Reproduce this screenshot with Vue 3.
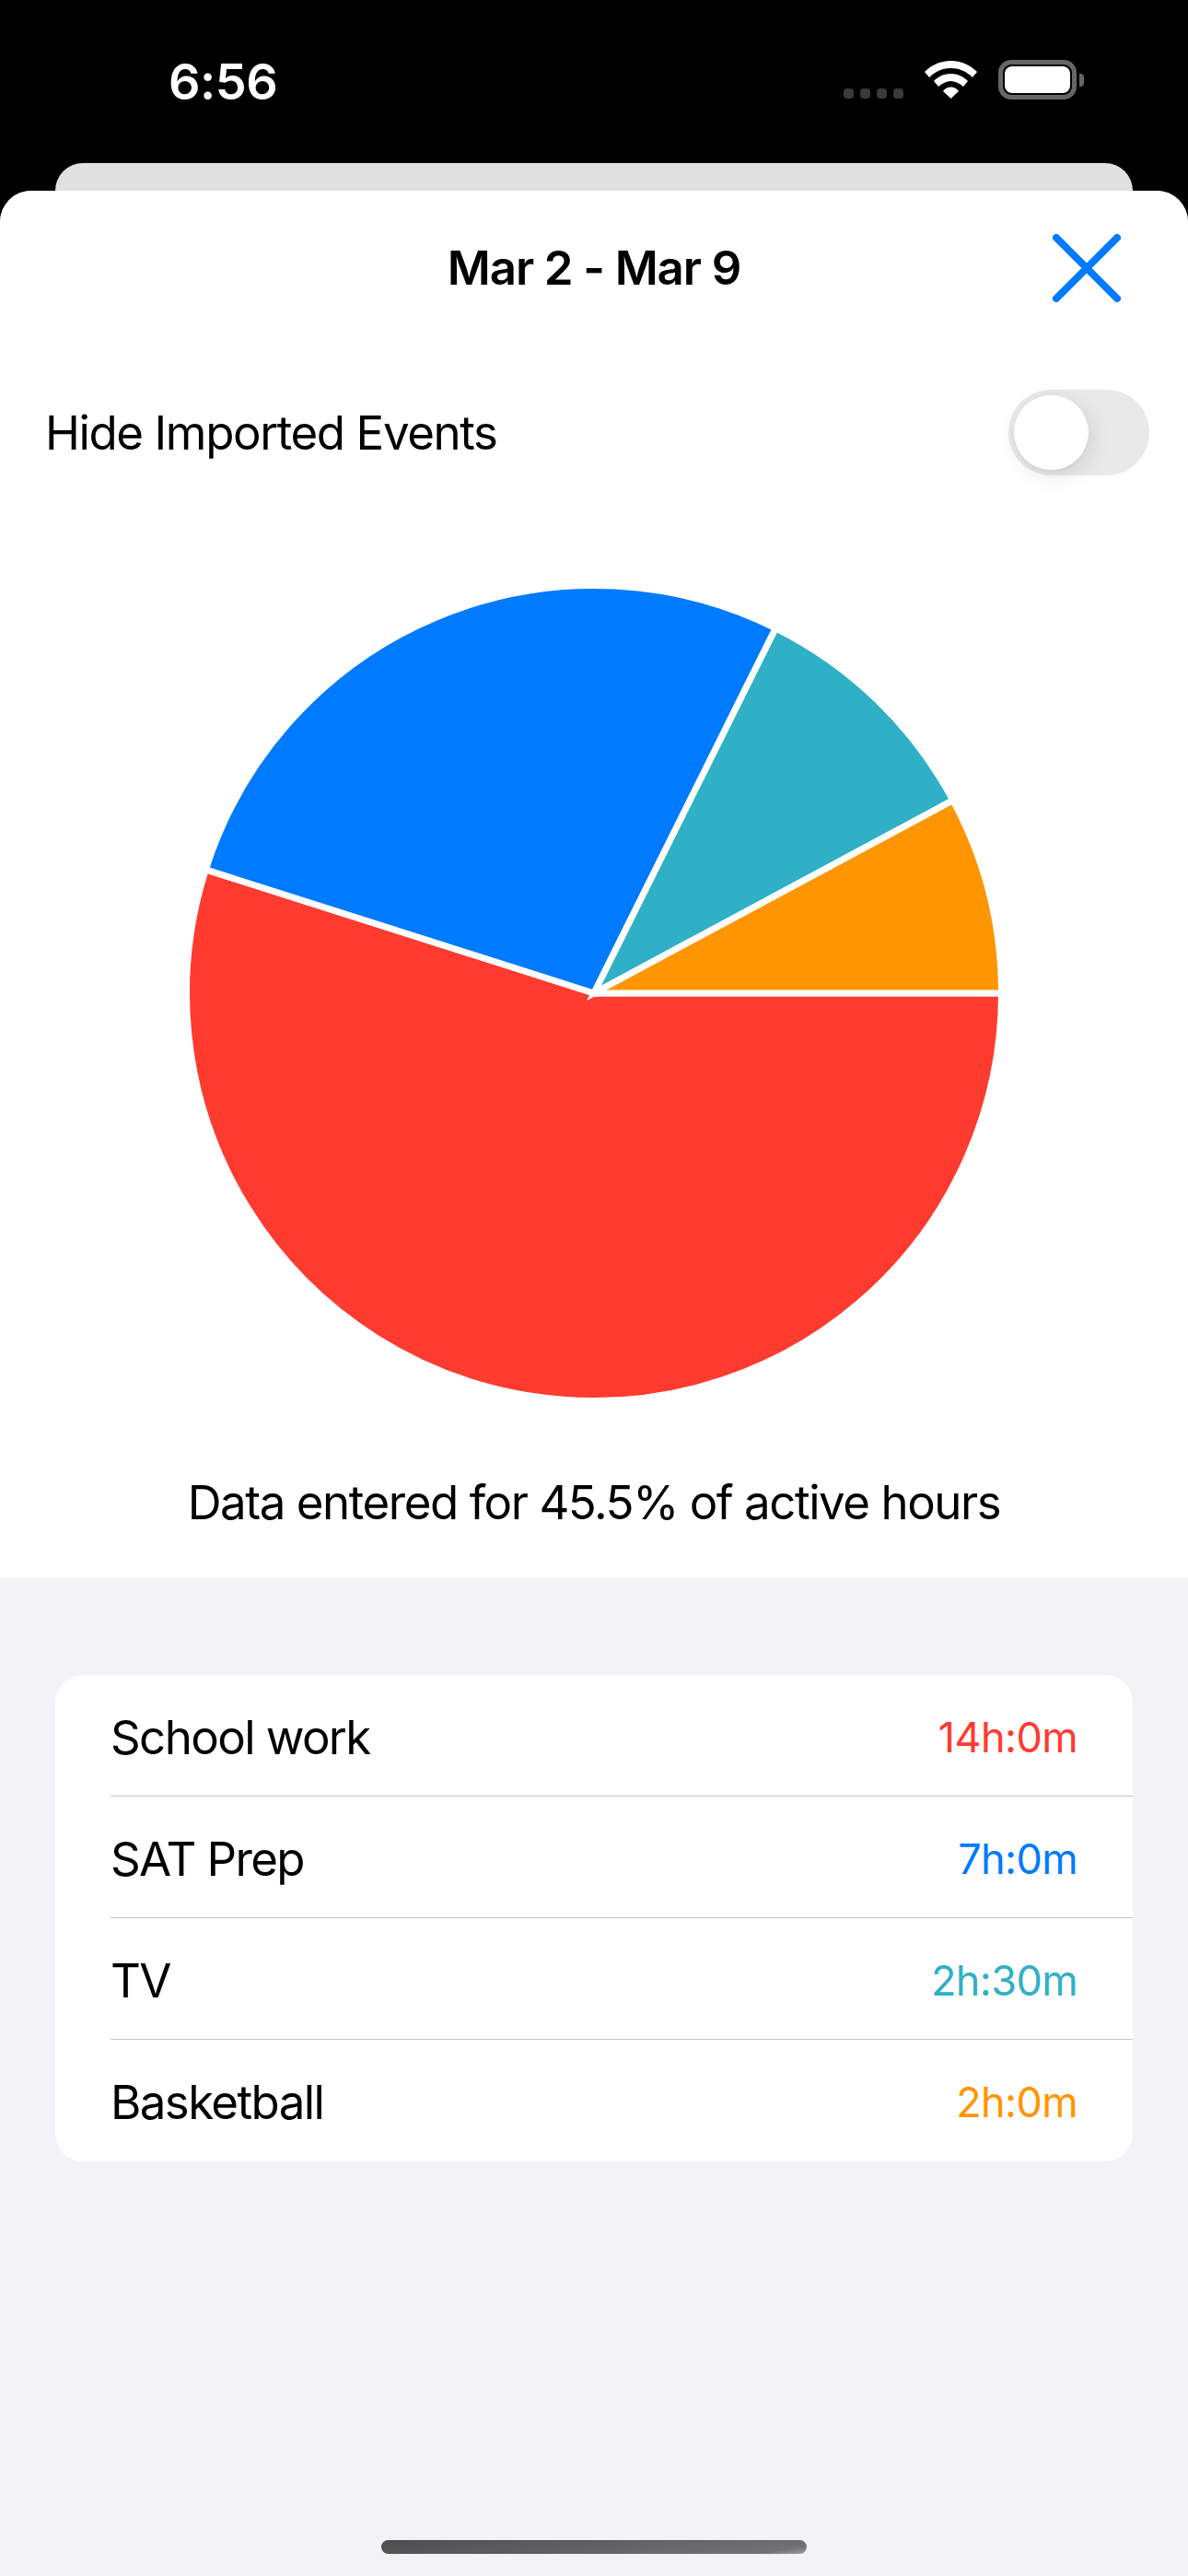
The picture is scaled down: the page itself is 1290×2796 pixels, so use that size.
<script setup>
const rows = [
  { name: 'School work', time: '14h:0m', hours: 14, color: '#ff3b30' },
  { name: 'SAT Prep', time: '7h:0m', hours: 7, color: '#007aff' },
  { name: 'TV', time: '2h:30m', hours: 2.5, color: '#30b0c7' },
  { name: 'Basketball', time: '2h:0m', hours: 2, color: '#ff9500' },
]
const total = rows.reduce((sum, r) => sum + r.hours, 0)
const C = 445
const R = 442.5
function point(deg) {
  const a = (deg * Math.PI) / 180
  return `${(C + R * Math.cos(a)).toFixed(2)} ${(C - R * Math.sin(a)).toFixed(2)}`
}
let angle = 0
const slices = [...rows].reverse().map((r) => {
  const start = angle
  const sweep = (r.hours / total) * 360
  angle += sweep
  const large = sweep > 180 ? 1 : 0
  return { color: r.color, d: `M${C} ${C} L${point(start)} A${R} ${R} 0 ${large} 0 ${point(angle)} Z` }
}).reverse()
</script>

<template>
  <div class="phone">
    <div class="status">
      <span class="clock">6:56</span>
      <div class="indicators">
        <div class="dots"><i></i><i></i><i></i><i></i></div>
        <svg class="wifi" width="57" height="41" viewBox="0 0 57 41" fill="#fff">
          <path d="M0 12C8 4 18 0 28.500 0C39 0 49 4 57 12L52 18C45 11 37 8 28.500 8C20 8 12 11 5 18Z" />
          <path d="M10 22C15 17 21 14 28.500 14C36 14 42 17 47 22L42 28C38 24.500 33 22 28.500 22C24 22 19 24.500 15 28Z" />
          <path d="M20 33C22 30 25 28.500 28.500 28.500C32 28.500 35 30 37 33L28.500 41Z" />
        </svg>
        <div class="battery"><div class="cell"><div class="fill"></div></div><div class="nub"></div></div>
      </div>
    </div>
    <div class="backcard"></div>
    <div class="sheet">
      <section class="top">
        <header class="head">
          <span></span>
          <h1>Mar 2 - Mar 9</h1>
          <svg class="close" width="74" height="74" viewBox="0 0 74 74" fill="none" stroke="#007aff" stroke-width="8" stroke-linecap="round">
            <path d="M4 4L70 70M70 4L4 70" />
          </svg>
        </header>
        <div class="hide">
          <span>Hide Imported Events</span>
          <div class="toggle"><div class="knob"></div></div>
        </div>
        <svg class="pie" width="890" height="890" viewBox="0 0 890 890">
          <path v-for="s in slices" :key="s.color" :d="s.d" :fill="s.color" stroke="#fff" stroke-width="7" />
        </svg>
        <p class="note">Data entered for 45.5% of active hours</p>
      </section>
      <ul class="list">
        <li v-for="r in rows" :key="r.name">
          <div class="row">
            <span class="name">{{ r.name }}</span>
            <span class="time" :style="{ color: r.color }">{{ r.time }}</span>
          </div>
        </li>
      </ul>
      <div class="home"></div>
    </div>
  </div>
</template>

<style scoped>
.phone {
  width: 1290px;
  height: 2796px;
  background: #000;
  display: flex;
  flex-direction: column;
  overflow: hidden;
  font-family: Inter, "Liberation Sans", sans-serif;
  color: #000;
}
.status {
  height: 177px;
  flex: none;
  box-sizing: border-box;
  padding: 65px 113px 0 183px;
  display: flex;
  justify-content: space-between;
  align-items: flex-start;
}
.clock {
  color: #fff;
  font-size: 54px;
  font-weight: 600;
  line-height: 47px;
  letter-spacing: -0.5px;
}
.indicators {
  display: flex;
  align-items: flex-start;
}
.dots {
  display: flex;
  gap: 7px;
  margin: 31px 23px 0 0;
}
.dots i {
  width: 11px;
  height: 11px;
  border-radius: 4px;
  background: #3a3a3a;
}
.wifi {
  margin-top: 1px;
  margin-right: 23px;
}
.battery {
  display: flex;
  align-items: center;
  gap: 3px;
}
.cell {
  width: 85px;
  height: 43px;
  box-sizing: border-box;
  border: 5px solid #666;
  border-radius: 14px;
  padding: 2px;
}
.fill {
  height: 100%;
  background: #fff;
  border-radius: 8px;
}
.nub {
  width: 5px;
  height: 14px;
  background: #666;
  border-radius: 0 4px 4px 0;
}
.backcard {
  flex: none;
  height: 30px;
  margin: 0 60px;
  background: #e0e0e0;
  border-radius: 30px 30px 0 0;
}
.sheet {
  flex: 1;
  background: #f2f2f7;
  border-radius: 34px 34px 0 0;
  overflow: hidden;
  display: flex;
  flex-direction: column;
}
.top {
  height: 1506px;
  flex: none;
  background: #fff;
  display: flex;
  flex-direction: column;
}
.head {
  display: grid;
  grid-template-columns: 1fr auto 1fr;
  align-items: center;
  height: 168px;
  padding: 0 73px 0 0;
}
.head h1 {
  margin: 0 0 0 73px;
  font-size: 51px;
  font-weight: 600;
  line-height: 60px;
  letter-spacing: -1.1px;
}
.close {
  justify-self: end;
}
.hide {
  display: flex;
  justify-content: space-between;
  align-items: center;
  height: 92px;
  margin-top: 48px;
  padding: 0 42px 0 49px;
  font-size: 51px;
  letter-spacing: -1.4px;
}
.toggle {
  width: 153px;
  height: 93px;
  box-sizing: border-box;
  padding: 6px;
  border-radius: 47px;
  background: #e9e9ea;
}
.knob {
  width: 81px;
  height: 81px;
  border-radius: 50%;
  background: #fff;
  box-shadow: 4px 6px 24px rgba(0, 0, 0, 0.1), 0 3px 3px rgba(0, 0, 0, 0.03);
}
.pie {
  display: block;
  margin: 118px auto 0;
  flex: none;
}
.note {
  margin: 78px 0 0;
  text-align: center;
  font-size: 51px;
  line-height: 60px;
  letter-spacing: -1.45px;
}
.list {
  list-style: none;
  margin: 105px 60px 0;
  padding: 0 0 0 60px;
  background: #fff;
  border-radius: 30px;
}
.row {
  height: 132px;
  box-sizing: border-box;
  display: flex;
  justify-content: space-between;
  align-items: center;
  padding: 3px 60px 0 0;
  border-bottom: 1.5px solid #c6c6c8;
}
li:last-child .row {
  border-bottom: 0;
}
.name {
  font-size: 51px;
  letter-spacing: -1.6px;
}
.time {
  font-size: 45px;
  letter-spacing: -0.6px;
}
.home {
  width: 462px;
  height: 15px;
  margin: auto auto 24px;
  border-radius: 8px;
  background: linear-gradient(172deg, #4d4d4d 0, #727272 90%, #a0a0a0 100%);
}
</style>
